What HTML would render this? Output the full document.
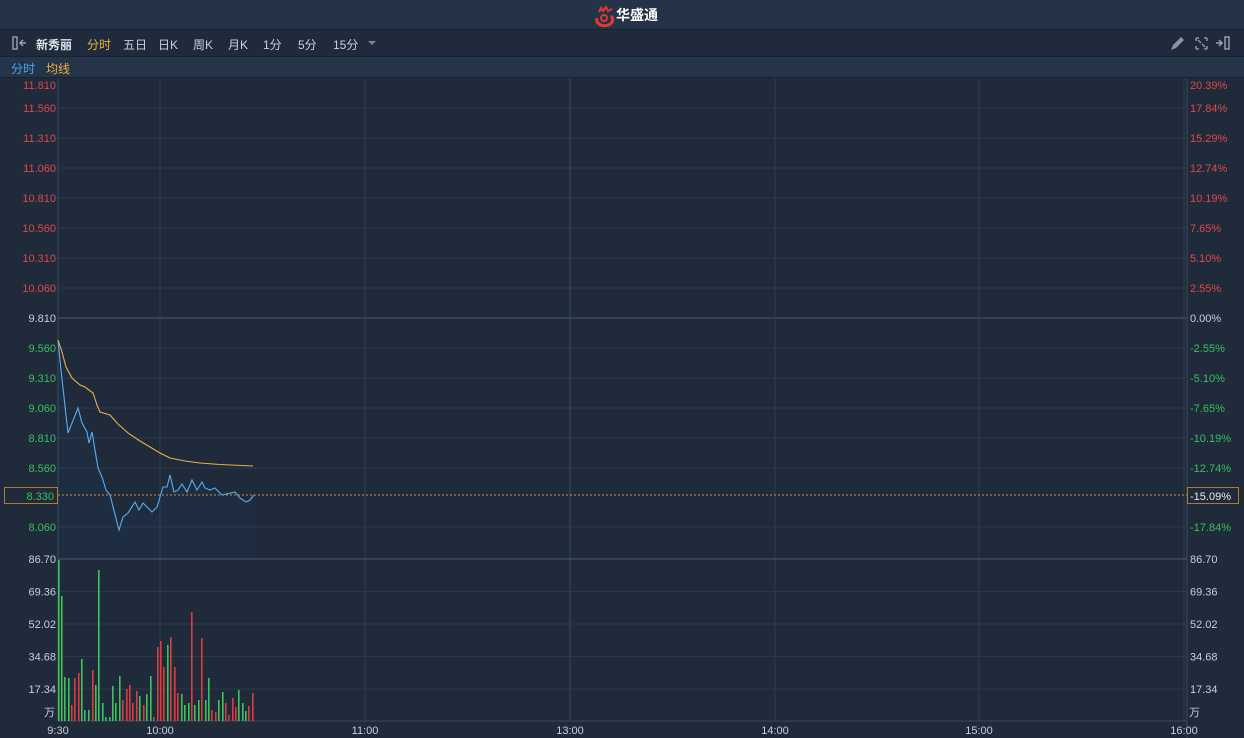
<!DOCTYPE html>
<html><head><meta charset="utf-8"><style>
body{margin:0;width:1244px;height:738px;background:#1f2a3b;overflow:hidden;font-family:"Liberation Sans","Noto Sans CJK SC",sans-serif;}
#top{position:absolute;left:0;top:0;width:1244px;height:29px;background:#253348;border-bottom:1px solid #18212e}
#tb{position:absolute;left:0;top:30px;width:1244px;height:26px;background:#1f2b3c;border-bottom:1px solid #18212e;font-size:12px;color:#c8d0dc}
#tb span{position:absolute;top:6px}
#tabs{position:absolute;left:0;top:57px;width:1244px;height:20px;background:#243449;border-bottom:1px solid #18212e;font-size:12px}
svg{position:absolute;left:0;top:0}
</style></head><body>
<div id="top"><svg width="1244" height="29"><g transform="translate(593,6)"><path d="M4 12 a8 6 0 1 0 14 -2" stroke="#e03a30" stroke-width="3" fill="none"/><path d="M6 6 l2 -4 l2 3 l3 -4 l2 4 l4 -2" stroke="#e03a30" stroke-width="2" fill="none"/><circle cx="11" cy="12" r="3" fill="none" stroke="#e03a30" stroke-width="2"/></g><text x="616" y="20" fill="#fff" font-size="14" font-weight="bold" font-family="Noto Sans CJK SC,sans-serif">华盛通</text></svg></div>
<div id="tb"><svg width="1244" height="26"><rect x="13" y="7" width="4" height="12" fill="none" stroke="#9aa4b2" stroke-width="1.4"/><path d="M20 13h6M23 10l-3 3 3 3" stroke="#9aa4b2" stroke-width="1.5" fill="none"/>
<path d="M1171 20l2-5 8-8 3 3-8 8z" fill="#8a94a2"/><path d="M1196 8h3M1196 8v3M1207 8h-3M1207 8v3M1196 19h3M1196 19v-3M1207 19h-3M1207 19v-3M1198 10l3 3M1205 17l-3-3" stroke="#8a94a2" stroke-width="1.5" fill="none"/><path d="M1216 13h5M1219 10l3 3-3 3" stroke="#9aa4b2" stroke-width="1.5" fill="none"/><rect x="1225" y="7" width="4" height="12" fill="none" stroke="#9aa4b2" stroke-width="1.4"/><path d="M368 11l4 4 4-4z" fill="#7a8494"/></svg>
<span style="left:36px;font-weight:bold;color:#dde3ea">新秀丽</span><span style="left:87px;color:#f0b040">分时</span><span style="left:123px">五日</span><span style="left:158px">日K</span><span style="left:193px">周K</span><span style="left:228px">月K</span><span style="left:263px">1分</span><span style="left:298px">5分</span><span style="left:333px">15分</span></div>
<div id="tabs"><span style="position:absolute;left:11px;top:3px;color:#4aa3ef">分时</span><span style="position:absolute;left:46px;top:3px;color:#f0b040">均线</span></div>
<svg width="1244" height="738" id="c" style="top:0"></svg>
<script>
var s='';
function L(x1,y1,x2,y2,c,w,d){s+='<line x1="'+x1+'" y1="'+y1+'" x2="'+x2+'" y2="'+y2+'" stroke="'+c+'" stroke-width="'+(w||1)+'"'+(d?' stroke-dasharray="'+d+'"':'')+'/>';}
function T(x,y,t,c,a){s+='<text x="'+x+'" y="'+y+'" fill="'+c+'" font-size="11" text-anchor="'+(a||'start')+'" font-family="Liberation Sans,Noto Sans CJK SC,sans-serif">'+t+'</text>';}
var px=['11.810','11.560','11.310','11.060','10.810','10.560','10.310','10.060','9.810','9.560','9.310','9.060','8.810','8.560','8.330','8.060'];
var pc=['20.39%','17.84%','15.29%','12.74%','10.19%','7.65%','5.10%','2.55%','0.00%','-2.55%','-5.10%','-7.65%','-10.19%','-12.74%','','-17.84%'];
for(var i=0;i<16;i++){if(i==14)continue;var y=78+i*30;var ys=i==15?527:y;var ty=i==0?85:ys;
 if(i>0)L(58,ys,1187,ys,i==8?'#4a5a72':'#2c3a4e');var col=i<8?'#e04848':(i==8?'#c8d0dc':'#3cbf5c');T(56,ty+4,px[i],col,'end');T(1190,ty+4,pc[i],col);}
[160,365,570,775,979,1184].forEach(function(x){L(x,78,x,721,'#2e3d52');});
L(570,78,570,721,'#3a4a62');
L(58,78,58,721,'#3a4a62');L(1187,78,1187,738,'#3a4a62');
var vy=[559,591.5,624,656.5,689];var vl=['86.70','69.36','52.02','34.68','17.34'];
for(i=0;i<5;i++){L(58,vy[i],1187,vy[i],i==0?'#4a5a72':'#2c3a4e');T(56,vy[i]+4,vl[i],'#c8d0dc','end');T(1190,vy[i]+4,vl[i],'#c8d0dc');}
L(58,721,1187,721,'#3a4a62');
T(44,716,'万','#c8d0dc');T(1189,716,'万','#c8d0dc');
[['9:30',58],['10:00',160],['11:00',365],['13:00',570],['14:00',775],['15:00',979],['16:00',1184]].forEach(function(a){T(a[1],734,a[0],'#c8d0dc','middle');});
L(58,495,1187,495,'#d08a40',1,'2,2');
s+='<rect x="4.5" y="487.5" width="53" height="16" fill="#1f2a3b" stroke="#b8782c"/>';T(54,500,'8.330','#3cbf5c','end');
s+='<rect x="1187.5" y="487.5" width="51" height="16" fill="#1f2a3b" stroke="#b8782c"/>';T(1190,500,'-15.09%','#e8ecf0');
var b=[[58,560,1],[61,596,1],[64,677,1],[68,678,1],[71,705,0],[74,678,0],[78,673,0],[81,659,1],[84,710,1],[88,710,1],[92,670,0],[95,685,1],[98,570,1],[102,703,1],[105,717,1],[109,717,1],[112,686,1],[115,703,1],[119,676,1],[122,700,0],[126,689,0],[129,685,0],[132,703,0],[136,691,0],[139,696,1],[143,705,0],[146,694,1],[150,676,1],[153,717,0],[157,647,0],[160,641,0],[163,667,0],[167,645,1],[170,637,0],[174,667,0],[177,693,0],[181,694,1],[184,705,1],[188,703,1],[191,612,0],[194,705,1],[198,700,1],[201,638,0],[205,700,1],[208,678,1],[211,710,0],[215,712,0],[218,700,1],[222,692,1],[225,703,0],[228,715,0],[232,698,0],[235,707,0],[238,690,1],[242,703,1],[245,711,1],[248,706,0],[252,693,0]];
b.forEach(function(v){s+='<rect x="'+v[0]+'" y="'+v[1]+'" width="1.6" height="'+(721-v[1])+'" fill="'+(v[2]?'#3ec35a':'#e0393e')+'"/>';});
var bl='58,340 61,370 68,433 78,408 82,423 87,432 89,443 92,432 98,468 102,477 106,490 110,495 119,530 123,517 128,513 135,502 139,510 143,503 152,512 157,507 163,487 167,487 170,475 174,492 178,490 182,484 187,492 192,480 197,490 202,482 205,488 210,490 215,488 222,495 235,492 240,498 246,502 250,500 254,495';
s+='<polygon points="'+bl+' 254,559 58,559" fill="rgba(60,120,200,0.04)"/>';
s+='<polyline points="'+bl+'" fill="none" stroke="#5aaef0" stroke-width="1.1"/>';
s+='<polyline points="58,340 62,352 66,367 72,378 80,385 85,387 93,393 97,405 100,412 110,415 118,424 128,433 140,441 150,447 160,453 170,458 185,461 200,463 220,464.5 253,466" fill="none" stroke="#e8b04a" stroke-width="1.1"/>';
document.getElementById('c').innerHTML=s;
</script>
</body></html>
